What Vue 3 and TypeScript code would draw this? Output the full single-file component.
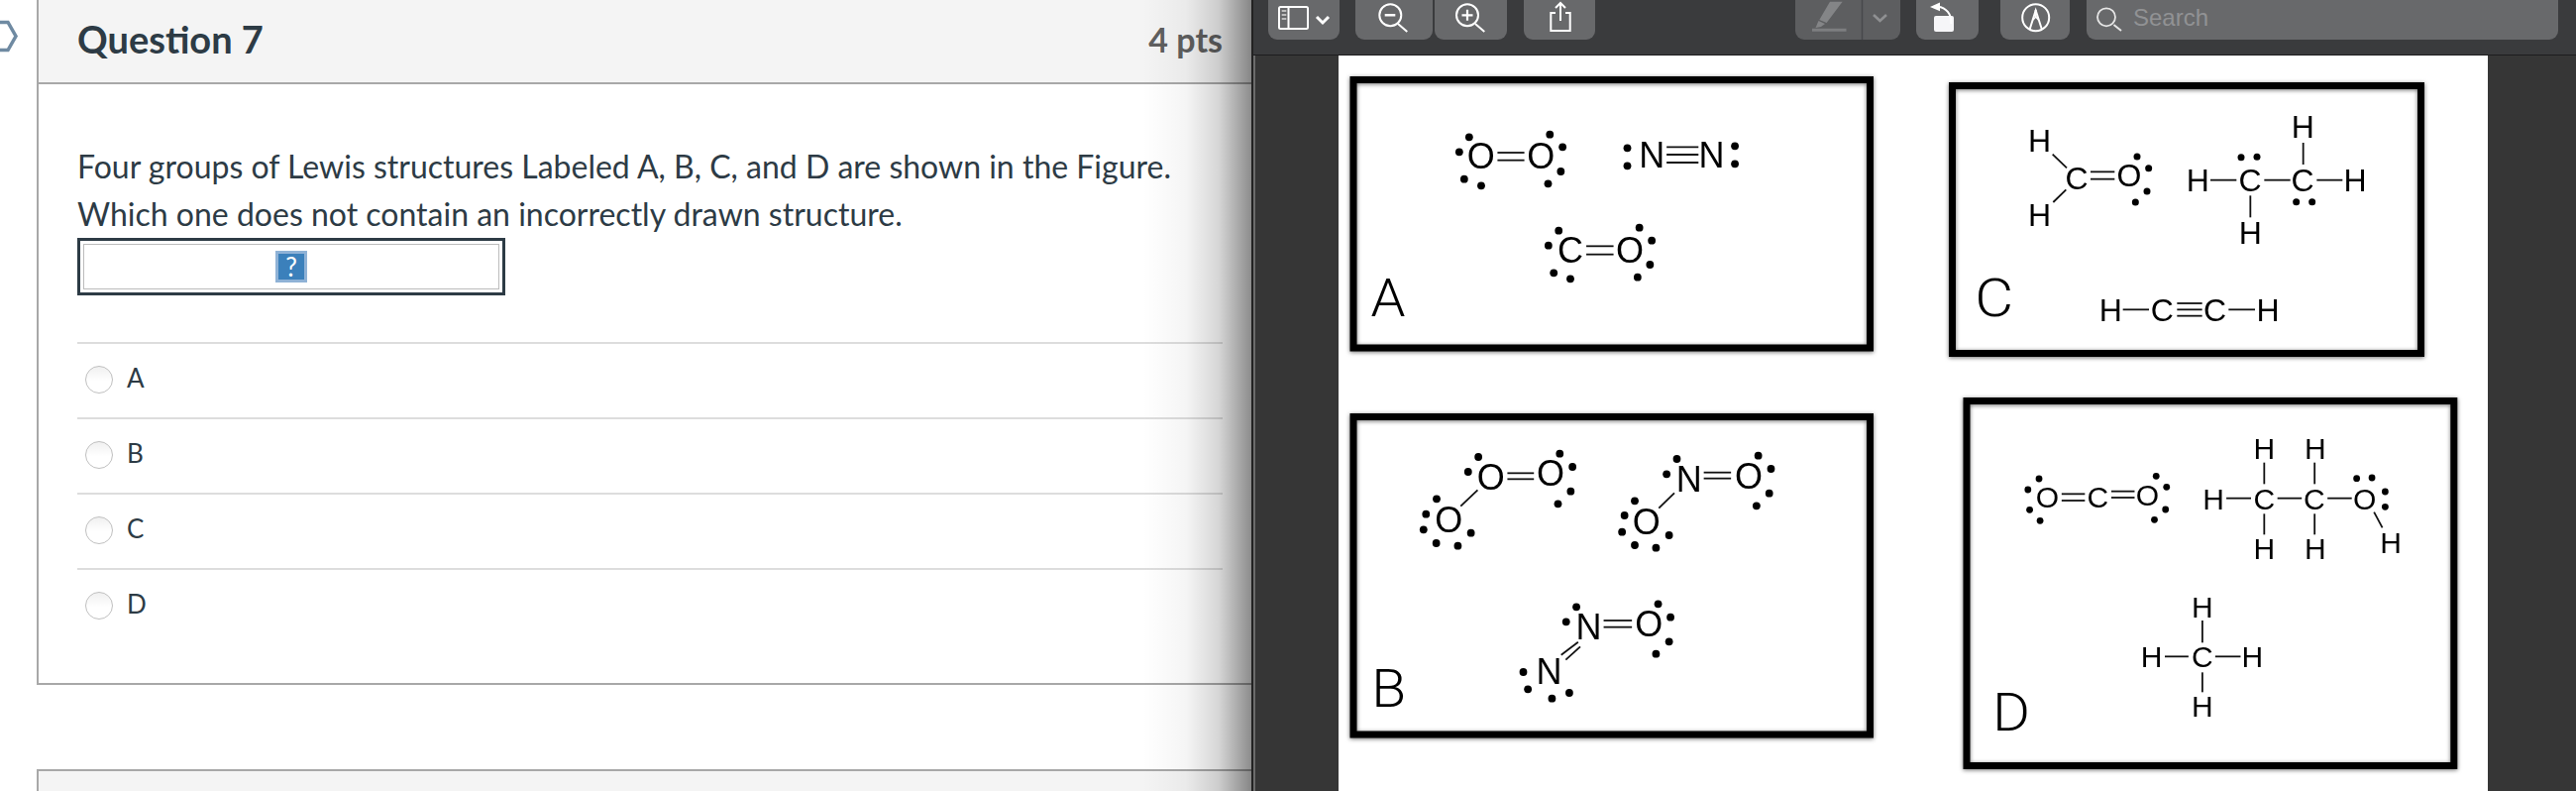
<script setup lang="ts">
type Fig = {
  ox: number; oy: number; sx: number; sy: number;
  box: [number, number, number, number];
  size: number; r: number;
  label: [string, number, number, number];
  atoms: [string, number, number][];
  dots: [number, number][];
  lines: [number, number, number, number][];
};

const figs: Fig[] = [
  {
    ox: 1350, oy: 60, sx: 2.8, sy: 3, box: [1366, 80.5, 1887.5, 351], size: 36, r: 3.9,
    label: ['A', 143, 722, 35],
    atoms: [['O', 405, 292], ['O', 575, 292], ['N', 888, 288], ['N', 1057, 288], ['C', 658, 578], ['O', 826, 578]],
    dots: [[372, 235], [344, 280], [358, 362], [406, 382], [600, 227], [636, 265], [631, 339], [595, 376], [819, 268], [819, 322], [1123, 262], [1123, 316], [625, 518], [596, 563], [611, 646], [658, 664], [853, 509], [888, 548], [883, 621], [848, 659]],
    lines: [[452, 282, 528, 282], [452, 305, 528, 305], [930, 265, 1020, 265], [930, 288, 1020, 288], [930, 312, 1020, 312], [703, 565, 780, 565], [703, 590, 780, 590]],
  },
  {
    ox: 1350, oy: 400, sx: 2.8, sy: 3, box: [1366, 420.5, 1887.5, 741], size: 36, r: 3.9,
    label: ['B', 145, 882, 35],
    atoms: [['O', 433, 243], ['O', 602, 233], ['O', 314, 373], ['N', 993, 250], ['O', 1162, 240], ['O', 873, 378], ['N', 710, 697], ['O', 880, 688], ['N', 598, 832]],
    dots: [[398, 183], [369, 228], [628, 173], [664, 213], [659, 287], [623, 325], [280, 310], [250, 356], [243, 403], [279, 444], [340, 452], [377, 413], [959, 189], [930, 235], [1189, 179], [1225, 219], [1220, 293], [1184, 331], [840, 316], [811, 360], [804, 410], [840, 450], [900, 458], [937, 420], [675, 637], [646, 682], [906, 628], [941, 668], [937, 742], [900, 779], [525, 834], [538, 886], [606, 914], [655, 897]],
    lines: [[480, 232, 555, 232], [480, 250, 555, 250], [396, 283, 348, 332], [1035, 230, 1112, 230], [1035, 248, 1112, 248], [952, 292, 908, 338], [680, 743, 632, 782], [686, 757, 645, 797], [752, 678, 832, 678], [752, 698, 832, 698]],
  },
  {
    ox: 1950, oy: 60, sx: 3, sy: 3, box: [1970.5, 86.5, 2443.5, 356.5], size: 32, r: 3.5,
    label: ['C', 188, 722, 39],
    atoms: [['H', 326, 247], ['H', 326, 472], ['C', 438, 360], ['O', 597, 352], ['H', 805, 365], ['C', 963, 366], ['C', 1122, 366], ['H', 1281, 365], ['H', 1123, 205], ['H', 964, 525], ['H', 541, 758], ['C', 697, 758], ['C', 857, 758], ['H', 1017, 758]],
    dots: [[621, 294], [656, 329], [651, 399], [616, 432], [936, 296], [984, 295], [1103, 431], [1151, 431]],
    lines: [[365, 287, 408, 328], [367, 432, 406, 394], [480, 340, 553, 340], [480, 362, 553, 362], [843, 365, 922, 365], [1006, 365, 1085, 365], [1165, 365, 1243, 365], [1124, 252, 1124, 318], [964, 412, 964, 478], [578, 757, 657, 757], [742, 738, 818, 738], [742, 757, 818, 757], [742, 776, 818, 776], [898, 757, 978, 757]],
  },
  {
    ox: 1950, oy: 390, sx: 2.851, sy: 3, box: [1985, 404.5, 2476.8, 772.5], size: 30, r: 3.4,
    label: ['D', 228, 985, 38],
    atoms: [['O', 332, 335], ['C', 477, 335], ['O', 620, 327], ['H', 810, 340], ['C', 956, 340], ['C', 1100, 340], ['O', 1245, 340], ['H', 956, 187], ['H', 1103, 187], ['H', 956, 490], ['H', 1103, 490], ['H', 1320, 472], ['H', 778, 668], ['H', 632, 818], ['C', 778, 818], ['H', 922, 818], ['H', 778, 968]],
    dots: [[308, 279], [276, 312], [281, 373], [311, 406], [645, 271], [675, 304], [672, 372], [640, 403], [1222, 278], [1266, 276], [1304, 318], [1304, 364]],
    lines: [[373, 325, 440, 325], [373, 345, 440, 345], [516, 317, 583, 317], [516, 336, 583, 336], [847, 338, 918, 338], [994, 338, 1064, 338], [1138, 338, 1208, 338], [956, 230, 956, 295], [1101, 230, 1101, 295], [956, 385, 956, 448], [1101, 385, 1101, 448], [1272, 380, 1296, 427], [670, 817, 738, 817], [815, 817, 888, 817], [778, 708, 778, 775], [778, 865, 778, 925]],
  },
];

const px = (f: Fig, x: number) => f.ox + x / f.sx;
const py = (f: Fig, y: number) => f.oy + y / f.sy;
const options = ['A', 'B', 'C', 'D'];
</script>

<template>
  <div class="page">
    <section class="quiz">
      <svg class="flag" width="20" height="36" viewBox="0 0 20 36">
        <path d="M-4 3.500 H8 L16 17.500 L8 31.500 H-4" fill="none" stroke="#6f8aa2" stroke-width="3.500" />
      </svg>
      <article class="card">
        <header class="card-head">
          <h2>Question 7</h2>
          <span class="pts">4 pts</span>
        </header>
        <div class="card-body">
          <p class="prompt">Four groups of Lewis structures Labeled A, B, C, and D are shown in the Figure.<br />Which one does not contain an incorrectly drawn structure.</p>
          <div class="embed"><div class="embed-inner"><span class="missing">?</span></div></div>
          <ul class="answers">
            <li v-for="o in options" :key="o"><span class="radio"></span><span>{{ o }}</span></li>
          </ul>
        </div>
      </article>
      <div class="next-card"></div>
      <div class="shade"></div>
    </section>

    <section class="viewer">
      <div class="toolbar">
        <div class="tb sidebar">
          <svg width="72" height="40" viewBox="0 0 72 40" fill="none" stroke="#fff" stroke-width="2"><rect x="11" y="7" width="29" height="22" rx="1.500" /><path d="M20.500 7 V29" /><path d="M13.700 11h4.600M13.700 15h4.600M13.700 19h4.600" stroke="#bdbdbd" /><path d="M49 17 L55 23 L61 17" stroke-width="3" /></svg>
        </div>
        <div class="tb z1">
          <svg width="78" height="40" viewBox="0 0 78 40" fill="none" stroke="#fff" stroke-width="2"><circle cx="35.300" cy="15.300" r="11" /><path d="M29.700 15.300h10.600" stroke-width="2.400" /><path d="M43 24 L52.300 32" /></svg>
        </div>
        <div class="tb z2">
          <svg width="74" height="40" viewBox="0 0 74 40" fill="none" stroke="#fff" stroke-width="2"><circle cx="33" cy="15.300" r="11" /><path d="M27.500 15.300h11M33 9.800v11" stroke-width="2.200" /><path d="M41 24 L50.300 32" /></svg>
        </div>
        <div class="tb share">
          <svg width="72" height="40" viewBox="0 0 72 40" fill="none" stroke="#fff" stroke-width="2"><path d="M32 13 H27.300 V31 H46.700 V13 H42" /><path d="M37 21 V3.500 M32 8 L37 3 L42 8" /></svg>
        </div>
        <div class="spacer"></div>
        <div class="tb marker">
          <svg width="106" height="40" viewBox="0 0 106 40"><path d="M35 1.700 H47.600 L31.600 23 L24.300 20Z" fill="#848587" /><path d="M23.500 21 L30 24 L26 27 L20.500 28Z" fill="#848587" /><path d="M17 30.300 H51.500" stroke="#7d7e80" stroke-width="3" /><path d="M67.500 0 V40" stroke="#48494b" stroke-width="1.500" /><path d="M79 15 L85.500 21 L92 15" fill="none" stroke="#8f9092" stroke-width="2.600" /></svg>
        </div>
        <div class="tb rotate">
          <svg width="63" height="40" viewBox="0 0 63 40"><rect x="18" y="16" width="20" height="16" rx="2" fill="#f6f6f8" /><path d="M22 6.700 C30 7.500 36 14 35.300 24" fill="none" stroke="#fff" stroke-width="2" /><path d="M24 2.500 L14 7 L24 11.300Z" fill="#fff" /></svg>
        </div>
        <div class="tb markup">
          <svg width="71" height="40" viewBox="0 0 71 40" fill="none" stroke="#fff" stroke-width="2"><circle cx="35.700" cy="17.700" r="13.500" /><path d="M29.500 30 L35.700 10.500 L42 30" /><path d="M33 20 L35.700 17 L38.500 20" stroke-width="1.500" /><path d="M35.700 10 V17" /></svg>
        </div>
        <div class="search">
          <svg width="40" height="40" viewBox="0 0 40 40" fill="none" stroke="#e6e6e6" stroke-width="1.800"><circle cx="20" cy="17.300" r="9" /><path d="M27.500 25 L35 31" stroke-width="2" /></svg>
          <span>Search</span>
        </div>
      </div>
      <div class="doc-area">
        <div class="doc">
          <svg class="figure" width="1160" height="742" viewBox="1351 56 1160 742">
            <g v-for="(f, i) in figs" :key="i">
              <rect class="frame" :x="f.box[0]" :y="f.box[1]" :width="f.box[2] - f.box[0]" :height="f.box[3] - f.box[1]" />
              <text class="label" :x="px(f, f.label[1])" :y="py(f, f.label[2])" :textLength="f.label[3]" lengthAdjust="spacingAndGlyphs">{{ f.label[0] }}</text>
              <line v-for="(l, j) in f.lines" :key="j" class="bond" :x1="px(f, l[0])" :y1="py(f, l[1])" :x2="px(f, l[2])" :y2="py(f, l[3])" />
              <text v-for="(a, j) in f.atoms" :key="j" class="atom" :font-size="f.size" :x="px(f, a[1])" :y="py(f, a[2])">{{ a[0] }}</text>
              <circle v-for="(d, j) in f.dots" :key="j" :cx="px(f, d[0])" :cy="py(f, d[1])" :r="f.r" fill="#000" />
            </g>
          </svg>
        </div>
      </div>
    </section>
  </div>
</template>

<style>
html, body { margin: 0; background: #fff; overflow: hidden; }
</style>

<style scoped>
.page { display: flex; width: 2600px; height: 798px; overflow: hidden; font-family: Lato, "Liberation Sans", sans-serif; }
.quiz { position: relative; flex: 0 0 1263px; height: 798px; overflow: hidden; background: #fff; padding-left: 37px; box-sizing: border-box; color: #2d3b45; }
.flag { position: absolute; left: 0; top: 19px; }
.card { border-left: 2px solid #a8a8a8; border-bottom: 2px solid #a8a8a8; height: 691px; box-sizing: border-box; }
.card-head { display: flex; justify-content: space-between; align-items: center; height: 85px; box-sizing: border-box; background: #f4f4f4; border-bottom: 2px solid #a8a8a8; padding: 0 29px 5px 39px; }
h2 { margin: 0; font-size: 38px; font-weight: 700; color: #2d3b45; }
.pts { font-size: 34px; font-weight: 700; color: #5f5f5f; }
.card-body { padding: 59px 29px 0 39px; }
.prompt { margin: 0; font-size: 32px; line-height: 48px; }
.embed { width: 432px; height: 58px; box-sizing: border-box; border: 3px solid #2d3b45; padding: 3px; }
.embed-inner { height: 100%; box-sizing: border-box; border: 1px solid #bcbcbc; display: flex; align-items: center; justify-content: center; }
.missing { width: 32px; height: 32px; box-sizing: border-box; border: 3px solid #8fb2d6; background: #3b80bb; color: #fff; font-size: 26px; line-height: 26px; text-align: center; }
.answers { list-style: none; margin: 47px 0 0; padding: 0; }
.answers li { display: flex; align-items: flex-start; height: 76px; box-sizing: border-box; border-top: 2px solid #dddddd; padding: 18px 0 0 8px; font-size: 26px; line-height: 32px; gap: 14px; }
.radio { width: 28px; height: 28px; margin-top: 4px; box-sizing: border-box; border-radius: 50%; border: 1.500px solid #c0c0c0; background: linear-gradient(#f0f0f0, #fff 55%); }
.next-card { margin-top: 85px; height: 40px; background: #f4f4f4; border-left: 2px solid #a8a8a8; border-top: 2px solid #a8a8a8; box-sizing: border-box; }
.shade { position: absolute; top: 0; right: 0; bottom: 0; width: 110px; background: linear-gradient(90deg, rgba(0,0,0,0) 0%, rgba(0,0,0,.04) 40%, rgba(0,0,0,.16) 70%, rgba(0,0,0,.45) 100%); }
.viewer { flex: 1; display: flex; flex-direction: column; border-left: 2px solid #222; box-shadow: inset 2px 0 0 #6c6c6c; background: #363636; }
.toolbar { display: flex; height: 56px; flex: none; box-sizing: border-box; background: #3a3b3d; border-bottom: 1px solid #1d1d1f; padding-left: 15px; align-items: flex-start; }
.tb { height: 40px; background: #68696b; border-radius: 0 0 9px 9px; flex: none; overflow: hidden; }
.tb svg { display: block; }
.sidebar { width: 72px; margin-right: 16px; }
.z1 { width: 78px; margin-right: 2px; }
.z2 { width: 73px; margin-right: 17px; }
.share { width: 72px; }
.spacer { width: 202px; flex: none; }
.marker { width: 106px; margin-right: 16px; background: #5d5e60; }
.rotate { width: 63px; margin-right: 22px; }
.markup { width: 70px; margin-right: 17px; }
.search { width: 476px; height: 40px; flex: none; background: #68696b; border-radius: 0 0 9px 9px; display: flex; align-items: flex-start; gap: 7px; box-sizing: border-box; color: #919294; font: 24px/36px "Liberation Sans", Arial, sans-serif; }
.search svg { flex: none; }
.doc-area { flex: 1; padding-left: 86px; min-height: 0; }
.doc { width: 1160px; height: 742px; background: #fff; overflow: hidden; }
.figure { display: block; }
.frame { fill: none; stroke: #000; stroke-width: 7px; filter: drop-shadow(0 1px 2px rgba(0,0,0,.55)); }
.bond { stroke: #111; stroke-width: 1.8px; }
.atom { font-family: "Liberation Sans", Arial, sans-serif; fill: #000; text-anchor: middle; dominant-baseline: central; filter: blur(.3px); }
.label { font-family: Roboto, "Liberation Sans", sans-serif; font-weight: 300; font-size: 54px; fill: #000; text-anchor: middle; dominant-baseline: central; }
</style>
